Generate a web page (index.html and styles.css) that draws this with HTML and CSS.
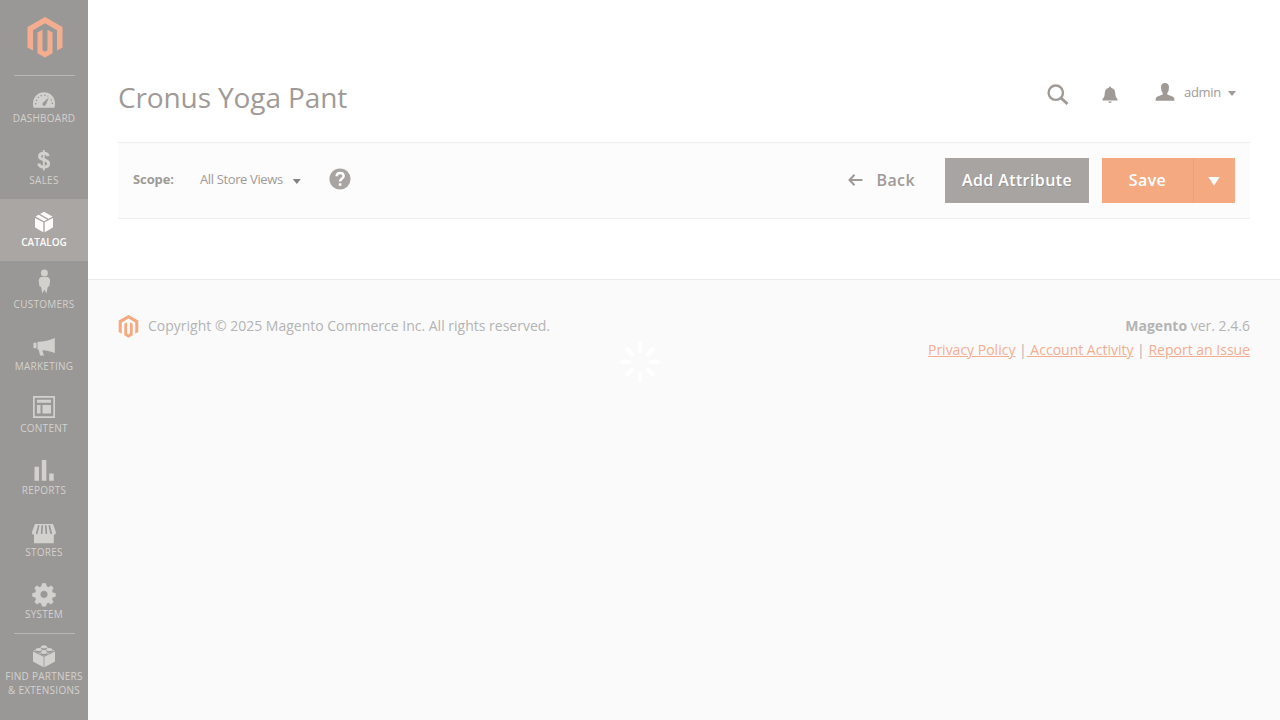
FILE: index.html
```html
<!DOCTYPE html>
<html lang="en">
<head>
<meta charset="utf-8">
<title>Cronus Yoga Pant</title>
<link rel="stylesheet" href="styles.css">
</head>
<body>
<aside class="sidebar">
  <a class="brand"><svg width="36" height="41" viewBox="0 0 36 41"><path d="M18 0 35.500 10v20.500L30 33.500V13.200L18 6.200 6 13.200v20.300L.5 30.500V10zM10.500 15.500 15.500 12.800V33.200L18 34.700 20.500 33.200V12.800L25.500 15.500V36.200L18 40.600 10.500 36.200z"/></svg></a>
  <nav class="menu">
    <a class="item ruled"><svg viewBox="28 85 32 28"><path d="M33.600 107.800Q33 106 33 103.500C33 97 38 92.300 44 92.300s11 4.700 11 11.200q0 2.500-.6 4.300z"/><path class="cut" d="m49 97.300-3 7.300q-1.300 2.100-3.100.8-1.300-1.500.3-3z"/><path class="cut-line" stroke-dasharray="1.400 2.100" d="M35.700 104.500c0-5.500 3.300-9.300 8.300-9.300 1.700 0 3 .4 4.200 1.100M51 99.300q1.300 2.200 1.400 5.200"/></svg><span>Dashboard</span></a>
    <a class="item"><svg viewBox="28 147 32 28"><path class="line dollar" d="M48.300 156q-.8-2.800-4.500-2.800-4.300 0-4.300 3.300c0 4.200 9.100 2.400 9.100 7.100q0 3.500-4.700 3.500-4.600 0-5.200-3.500"/><path class="line" d="M43.800 150v20.500"/></svg><span>Sales</span></a>
    <a class="item active"><svg viewBox="28 209 32 28"><path d="m35 218 8.300 4.300v9.900L35 227.500zM53 218v9.500l-8.300 4.700v-9.900zM35.600 216.500l3-1.700 8.500 4.600-3.100 1.800zM40 214l4-2.200 8.500 4.700-3.900 2.200z"/></svg><span>Catalog</span></a>
    <a class="item"><svg viewBox="28 271 32 28"><circle cx="44.400" cy="272.900" r="3.500"/><path d="M41 277h6.800q2.500 1 2.200 4.800l-.7 4.700h-1.200l-.6 1.500-1.100 5.500-2-3.900-2 3.900-1.100-5.500-.6-1.500h-1.200l-.7-4.700q-.3-3.800 2.200-4.800z"/></svg><span>Customers</span></a>
    <a class="item"><svg viewBox="28 333 32 28"><path d="M33.500 342.800h3v5.400h-3zM37.500 342q10-.7 17.300-4v15q-7-3-17.300-3.600zM38.500 349h4.500l-.5 2 1.500 4.500h-4z"/></svg><span>Marketing</span></a>
    <a class="item"><svg viewBox="28 395 32 28"><path fill-rule="evenodd" d="M33 396h22v22H33zM34.700 397.700v18.600h18.600v-18.600zM37 399.800h14v3H37zM37 405h3.500v8.500H37zM42.500 405H51v8.500h-8.500z"/></svg><span>Content</span></a>
    <a class="item"><svg viewBox="28 457 32 28"><path d="M34.500 466.800h4.500v14h-4.500zM41.800 460h4.500v20.800h-4.500zM49.200 473.500h4.500v7.300h-4.500z"/></svg><span>Reports</span></a>
    <a class="item"><svg viewBox="28 519 32 28"><path d="M35 524h18l3 8.500q-.3 2.200-2.200 2.200v8.600H34V534.700q-2 0-2.200-2.200z"/><path class="cut-line awning" d="m38.800 525.300-2.200 8.700M42.300 525.300l-.7 8.700M45.700 525.300l.7 8.700M49.200 525.300l2.200 8.700"/></svg><span>Stores</span></a>
    <a class="item"><svg viewBox="28 581 32 28"><path fill-rule="evenodd" stroke="currentColor" stroke-width=".6" stroke-linejoin="round" d="m42.300 583.500 3.400 0 .8 3.100 1.900.8 2.800-1.600 2 2.300-1.400 2.700.8 1.900 2.800.8v2.900l-2.800.9-.8 2 1.400 2.600-2 2.200-2.800-1.500-1.900.8-.8 2.800h-3.400l-.8-2.800-1.900-.8-2.800 1.500-2-2.200 1.400-2.600-.8-2-2.800-.9v-2.900l2.800-.8.8-1.900-1.400-2.700 2-2.300 2.800 1.600 1.900-.8zM44 590.500a3.900 3.900 0 1 0 .01 0z"/></svg><span>System</span></a>
    <a class="item ruled"><svg viewBox="28 643 32 28"><path d="M33 651.600 43.600 656.800v10.400L33 661.500zM55 651.600v9.900l-10.600 5.700v-10.400zM33.600 650.700 44 645.700l10.400 5L44 655.800z"/><g class="cut"><ellipse cx="44" cy="648.300" rx="3.300" ry="1.900"/><ellipse cx="38.700" cy="650.900" rx="3.300" ry="1.900"/><ellipse cx="49.300" cy="650.900" rx="3.300" ry="1.900"/><ellipse cx="44" cy="653.500" rx="3.300" ry="1.900"/></g><g><ellipse cx="44" cy="646.800" rx="3" ry="1.600"/><ellipse cx="38.700" cy="649.500" rx="3" ry="1.600"/><ellipse cx="49.300" cy="649.500" rx="3" ry="1.600"/><ellipse cx="44" cy="652.300" rx="3" ry="1.600"/></g></svg><span>Find Partners<br>&amp; Extensions</span></a>
  </nav>
</aside>
<div class="page">
  <main class="content">
    <header class="header">
      <h1>Cronus Yoga Pant</h1>
      <div class="tools">
        <svg class="search" width="22" height="22" viewBox="0 0 22 22"><circle cx="8.800" cy="8.700" r="7.200"/><path d="m14 14 6.500 6"/></svg>
        <svg class="bell" width="16" height="18" viewBox="0 0 16 18"><path d="M7 1q1-1 2 0v.7q4 1 4.200 5.300.2 4.500 2.300 6v1.500H.5V13q2.100-1.500 2.300-6Q3 2.700 7 1.700zM6.300 15.500h3.400Q9.500 17 8 17t-1.700-1.500z"/></svg>
        <a class="account"><svg width="20" height="18" viewBox="0 0 20 18"><path d="M10 0q4 0 4 4.500Q14 8 12.300 10v1.500l5.700 2.300q1.500.7 1.500 4H.5q0-3.300 1.500-4l5.700-2.300V10Q6 8 6 4.500 6 0 10 0z"/></svg><span>admin</span><i class="caret"></i></a>
      </div>
    </header>
    <section class="toolbar">
      <strong class="scope">Scope:</strong>
      <a class="store">All Store Views<i class="caret dark"></i></a>
      <svg class="help" width="22" height="22" viewBox="0 0 22 22"><circle cx="11" cy="11" r="10.600"/><path d="M7.700 8.300q0-3.300 3.400-3.300 3.500 0 3.500 3 0 1.500-1.800 2.700Q11 12 11 13.500"/><rect x="9.800" y="15.300" width="2.600" height="2.500"/></svg>
      <div class="actions">
        <button class="back"><svg width="15" height="12" viewBox="0 0 15 12"><path d="M6.500.7 1.500 6l5 5.300M1.500 6H14.500"/></svg>Back</button>
        <button class="add">Add Attribute</button>
        <div class="split"><button class="save">Save</button><button class="more" aria-label="More"><i></i></button></div>
      </div>
    </section>
  </main>
  <footer class="footer">
    <div class="copyright"><svg width="21" height="23" viewBox="0 0 36 41"><path d="M18 0 35.500 10v20.500L30 33.500V13.200L18 6.200 6 13.200v20.300L.5 30.500V10zM10.500 15.500 15.500 12.800V33.200L18 34.700 20.500 33.200V12.800L25.500 15.500V36.200L18 40.600 10.500 36.200z"/></svg><span>Copyright © 2025 Magento Commerce Inc. All rights reserved.</span></div>
    <div class="legal"><p><strong>Magento</strong> ver. 2.4.6</p><p><a>Privacy Policy</a> |<a> Account Activity</a> | <a>Report an Issue</a></p></div>
  </footer>
</div>
<svg class="spinner" width="40" height="40" viewBox="0 0 40 40"><path d="M20 2v7M20 31v7M2 20h7M31 20h7M7.300 7.300l5 5M27.700 27.700l5 5M32.700 7.300l-5 5M12.300 27.700l-5 5"/></svg>
</body>
</html>
```
FILE: styles.css
```css
* { box-sizing: border-box; }
body { margin: 0; height: 720px; display: flex; overflow: hidden; background: #fafafa; font-family: "Open Sans", sans-serif; color: #a09a97; }
h1, p { margin: 0; font-weight: 400; }
svg { display: block; fill: currentColor; flex: none; }
button { border: 0; padding: 0; background: none; font: 600 16px/22px "Open Sans", sans-serif; letter-spacing: .4px; color: inherit; }

.sidebar { width: 88px; height: 720px; flex: none; background: #9a9896; }
.brand { display: flex; height: 75px; padding: 17px 0 0 26.500px; color: #f5ad90; }
.menu { display: flex; flex-direction: column; }
.item { height: 62px; padding-top: 10px; display: flex; flex-direction: column; align-items: center; color: #d3d1ce; font-size: 10px; line-height: 14px; letter-spacing: .25px; text-transform: uppercase; text-align: center; white-space: nowrap; }
.item svg { width: 32px; height: 28px; margin-bottom: -2px; overflow: visible; }
.item:last-child { height: 87px; }
.active { background: #aaa6a3; color: #fdfcfb; font-weight: 600; letter-spacing: -.05px; }
.ruled { background: linear-gradient(#b9b7b4, #b9b7b4) center top / 61px 1px no-repeat; }
.cut { fill: #9a9896; }
.cut-line { fill: none; stroke: #9a9896; stroke-width: 1.3; }
.awning { stroke-width: 1.7; }
.line { fill: none; stroke: currentColor; stroke-width: 1.8; }
.dollar { stroke-width: 3; }

.page { flex: 1; }
.content { height: 280px; padding: 73px 30px 0; background: #fff; border-bottom: 1px solid #ebebeb; }
.header { display: flex; justify-content: space-between; height: 69px; }
h1 { font-size: 28px; line-height: 48px; letter-spacing: -.12px; }
.tools { display: flex; align-items: flex-start; padding: 10px 14px 0 0; }
.search { margin-top: 1px; fill: none; stroke: #a09a97; stroke-width: 2.400; }
.search path { stroke-width: 3; }
.bell { margin: 3px 37px 0 33px; }
.account { display: flex; font-size: 13px; line-height: 20px; letter-spacing: -.3px; }
.account span { margin: -1px 7px 0 9px; }
.caret { width: 8px; height: 5px; margin-top: 8px; background: currentColor; clip-path: polygon(0 0, 100% 0, 50% 100%); }

.toolbar { display: flex; align-items: center; height: 77px; padding: 0 15px; background: #fcfcfc; border: solid #efefef; border-width: 1px 0; font-size: 13px; line-height: 18px; }
.scope { width: 67px; padding-bottom: 3px; font-weight: 700; letter-spacing: -.1px; }
.store { display: flex; letter-spacing: -.37px; padding-bottom: 3px; width: 129px; }
.dark { color: #85817e; margin: 9px 0 0 10px; }
.help { margin-top: -3px; color: #a8a4a1; }
.help path { fill: none; stroke: #fff; stroke-width: 2.500; }
.help rect { fill: #fff; }
.actions { margin-left: auto; display: flex; height: 45px; }
.actions button { padding-bottom: 2px; }
.back { display: flex; align-items: center; gap: 13px; margin-right: 30px; }
.back svg { fill: none; stroke: currentColor; stroke-width: 2; }
.add { width: 144px; margin-right: 13px; background: #a8a4a1; color: #fff; text-shadow: 1px 1px 0 rgba(0,0,0,.12); }
.split { display: flex; color: #fff; text-shadow: 1px 1px 0 rgba(0,0,0,.12); }
.save { width: 92px; background: #f5a980; border-right: 1px solid #e8a27b; }
.more { width: 41px; background: #f5a980; display: flex; align-items: center; justify-content: center; }
.more i { width: 12px; height: 9px; margin: 3px 1px 0 0; background: #fff; clip-path: polygon(0 0, 100% 0, 50% 100%); }

.footer { display: flex; justify-content: space-between; padding: 34px 30px 0; color: #b4b4b4; font-size: 14px; line-height: 24px; }
.copyright { display: flex; gap: 9px; height: 24px; }
.copyright svg { margin-top: 1px; color: #f5a980; }
.legal { text-align: right; }
.legal a { color: #f5ad90; text-decoration: underline; }
.spinner { position: absolute; left: 620px; top: 342px; fill: none; stroke: #fff; stroke-width: 4; stroke-linecap: round; }
```
